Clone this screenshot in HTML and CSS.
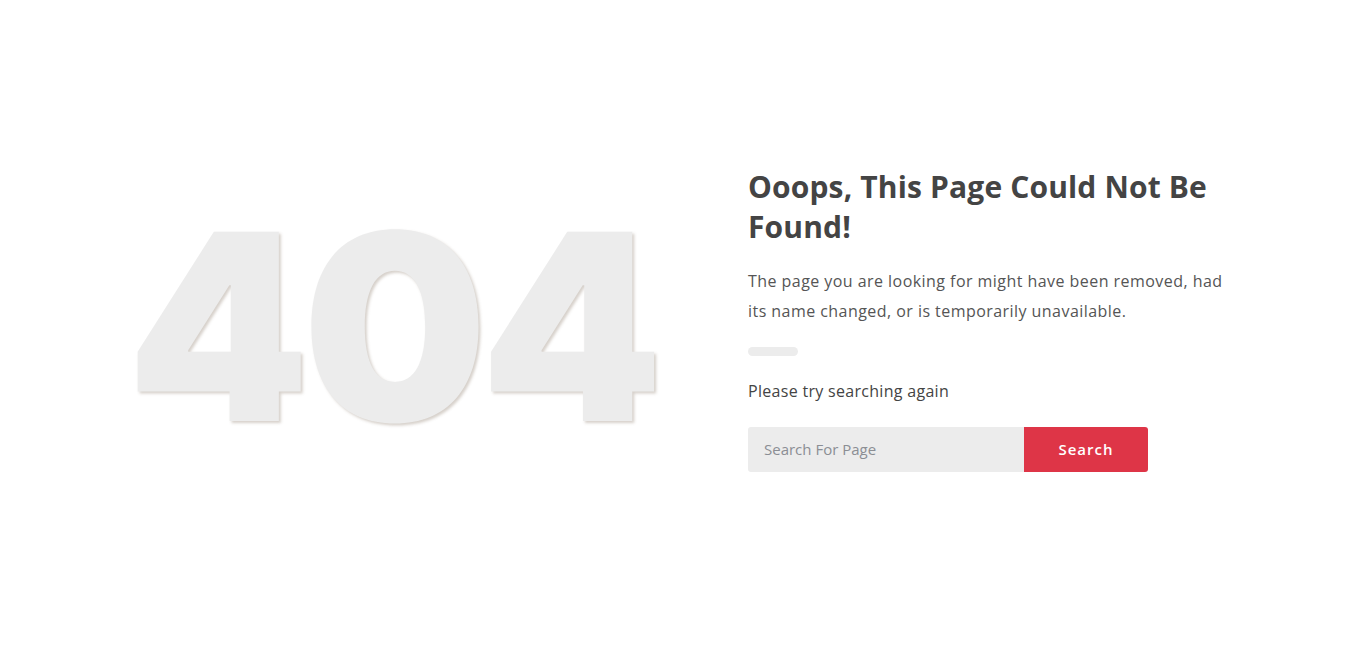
FILE: index.html
```html
<!DOCTYPE html>
<html lang="en">
<head>
<meta charset="utf-8">
<title>404 - Page Not Found</title>
<link rel="stylesheet" href="styles.css">
</head>
<body>
<main class="page">
  <section class="notfound">
    <div class="code">
      <h1 class="code-text">404</h1>
    </div>
    <div class="info">
      <h2 class="title">Ooops, This Page Could Not Be Found!</h2>
      <p class="desc">The page you are looking for might have been removed, had its name changed, or is temporarily unavailable.</p>
      <div class="bar"></div>
      <p class="hint">Please try searching again</p>
      <form class="search">
        <input class="search-input" type="text" placeholder="Search For Page">
        <button class="search-btn" type="button">Search</button>
      </form>
    </div>
  </section>
</main>
</body>
</html>
```
FILE: styles.css
```css
* { box-sizing: border-box; }
html, body { margin: 0; padding: 0; background: #fff; }
body { font-family: "Open Sans", "Liberation Sans", sans-serif; color: #4a4a4a; }

.page {
  height: 657px;
  display: flex;
  align-items: center;
}

.notfound {
  display: flex;
  align-items: center;
  padding-left: 127px;
  padding-bottom: 20px;
}

.code {
  width: 621px;
  padding-top: 16px;
}

.code-text {
  margin: 0;
  font-family: Inter, "Open Sans", sans-serif;
  font-weight: 900;
  font-size: 260px;
  line-height: 1;
  letter-spacing: -7px;
  color: #ececec;
  text-shadow: 2px 2px 3px rgba(120, 100, 80, 0.3);
}

.info {
  width: 490px;
  padding-top: 1px;
}

.title {
  margin: 0;
  font-size: 30px;
  font-weight: 700;
  line-height: 40px;
  letter-spacing: 0.15px;
  color: #444;
}

.desc {
  margin: 19px 0 0;
  font-size: 16px;
  line-height: 30px;
  letter-spacing: 0.45px;
  color: #555;
}

.bar {
  margin-top: 21px;
  width: 50px;
  height: 9px;
  border-radius: 5px;
  background: #ececec;
}

.hint {
  margin: 20px 0 0;
  font-size: 16px;
  line-height: 30px;
  letter-spacing: 0.3px;
  color: #444;
}

.search {
  margin-top: 21px;
  display: flex;
  width: 400px;
  height: 45px;
}

.search-input {
  flex: 1;
  min-width: 0;
  border: none;
  background: #ececec;
  border-radius: 3px 0 0 3px;
  padding: 0 16px;
  font-family: inherit;
  font-size: 15px;
  color: #555;
  outline: none;
}
.search-input::placeholder { color: #8b8e94; }

.search-btn {
  width: 124px;
  border: none;
  background: #de3547;
  color: #fff;
  border-radius: 0 3px 3px 0;
  font-family: inherit;
  font-size: 15px;
  font-weight: 600;
  letter-spacing: 1px;
}
```
